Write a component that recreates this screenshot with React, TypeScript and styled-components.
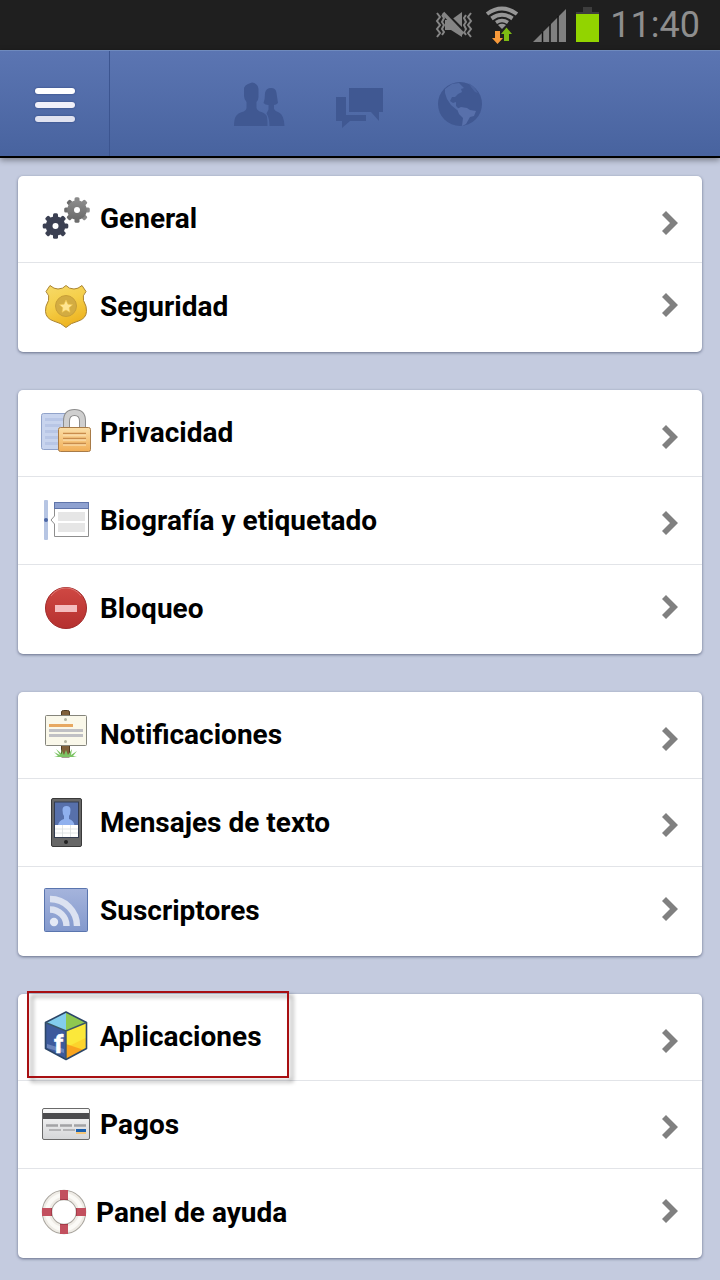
import React from 'react';
import styled, { createGlobalStyle } from 'styled-components';

const GlobalStyle = createGlobalStyle`
	* {
		box-sizing: border-box;
	}
	body {
		margin: 0;
		background-color: #c4cbdf;
		font-family: Roboto, 'Liberation Sans', sans-serif;
	}
`;

const StatusBar = styled.div`
	height: 50px;
	padding-right: 20px;
	display: flex;
	align-items: center;
	justify-content: flex-end;
	gap: 10px;
	background-color: #1f1f1f;
	svg {
		display: block;
	}
	time {
		font-size: 36px;
		line-height: 50px;
		font-weight: 400;
		color: #8e8e8e;
	}
`;

const TopBar = styled.header`
	display: grid;
	grid-template-columns: 110px 1fr 110px;
	height: 108px;
	border-top: 1px solid #6f8abd;
	border-bottom: 2px solid #000;
	background: linear-gradient(#5b75b2, #48639f);
	box-shadow: 0 2px 6px rgba(0, 0, 0, 0.4);
`;

const MenuButton = styled.button`
	display: flex;
	flex-direction: column;
	align-items: center;
	justify-content: center;
	gap: 8px;
	padding: 2px 0 0;
	border: none;
	border-right: 1px solid #3c5590;
	background: none;
`;

const Bar = styled.span<{ $color: string }>`
	width: 40px;
	height: 6px;
	border-radius: 3px;
	background-color: ${({ $color }) => $color};
	box-shadow: 0 0 2px #2c4178;
`;

const Tabs = styled.nav`
	display: flex;
	justify-content: center;
`;

const TabButton = styled.button`
	display: flex;
	align-items: center;
	justify-content: center;
	width: 100px;
	padding: 0 0 2px;
	border: none;
	background: none;
	color: #405892;
	svg {
		overflow: visible;
	}
`;

const Content = styled.main`
	display: flex;
	flex-direction: column;
	gap: 38px;
	padding: 18px 18px 22px;
`;

const Card = styled.ul`
	margin: 0;
	padding: 0;
	list-style: none;
	border-radius: 5px;
	background-color: #fff;
	box-shadow: 0 1px 3px rgba(40, 50, 80, 0.6);
`;

const ItemLink = styled.a`
	display: flex;
	align-items: center;
	gap: 8px;
	height: 86px;
	padding: 0 24px 0 22px;
	color: #000;
	text-decoration: none;
	svg {
		flex: none;
	}
`;

const Label = styled.span`
	flex: 1;
	padding-top: 2px;
	font-size: 28px;
	line-height: 32px;
	font-weight: 700;
`;

const Item = styled.li`
	position: relative;
	padding-bottom: 1px;
	border-bottom: 1px solid #e2e4e8;
	.chevron {
		margin-top: 6px;
	}
	&:first-child {
		padding-bottom: 0;
		.chevron {
			margin-top: 8px;
		}
		${Label} {
			padding-top: 0;
		}
	}
	&:last-child {
		padding-bottom: 3px;
		border-bottom: none;
		.chevron {
			margin: 0 0 2px;
		}
	}
`;

const Highlight = styled.div`
	position: absolute;
	top: -3px;
	left: 9px;
	width: 262px;
	height: 87px;
	border: 2px solid #a80f12;
	filter: drop-shadow(4px 4px 2px rgba(0, 0, 0, 0.4));
	pointer-events: none;
`;

/* status bar */

const VibrateIcon = () => (
	<svg width='40' height='50' viewBox='0 0 40 50' fill='none' stroke='#858585' strokeWidth='2'>
		<path d='M3 13l3 4-3 4 3 4-3 4 3 4-3 4M8 15l2 3-2 4 2 3-2 4 2 3-2 3M37 13l-3 4 3 4-3 4 3 4-3 4 3 4M32 15l-2 3 2 4-2 3 2 4-2 3 2 3' />
		<path d='M11 20h6l11-8v25l-11-7h-6z' fill='#858585' stroke='none' />
		<path d='M10 11l20 20' stroke='#1f1f1f' strokeWidth='2.500' />
		<path d='M9 13l20 21' strokeWidth='3.500' />
	</svg>
);

const WifiIcon = () => (
	<svg width='36' height='50' viewBox='0 0 36 50' fill='none' stroke='#969696' strokeWidth='4'>
		<path d='M3 14Q18 3 33 14M7.500 18.500Q18 11 28.500 18.500' />
		<path d='M12 22.500Q18 18.500 24 22.500' strokeWidth='3.500' />
		<path d='M14 25Q18 22.500 22 25L18 29z' fill='#969696' stroke='none' />
		<path d='M11 31h5v7h3l-5.500 6L8 38h3z' fill='#f7993a' stroke='none' />
		<path d='M20 41h5v-7h3l-5.500-6.500L17 34h3z' fill='#7dbb13' stroke='none' />
	</svg>
);

const SignalIcon = () => (
	<svg width='36' height='50' viewBox='0 0 36 50'>
		<path d='M3 42L36 9v33z' fill='#808080' />
		<path d='M12.500 32v10M20 24v18M28 16v26' stroke='#111' strokeWidth='1.500' />
	</svg>
);

const BatteryIcon = () => (
	<svg width='24' height='50' viewBox='0 0 24 50'>
		<path d='M7 7h9v5h7v2H0v-2h7z' fill='#3d3d3d' />
		<rect y='14' width='23' height='28' fill='#92d400' />
	</svg>
);

/* top bar */

const FriendsIcon = () => (
	<svg width='52' height='46' viewBox='0 0 52 46' fill='currentColor'>
		<path d='M10 8q1-3 4-4l4-1.500q6 1 6.500 6.500v8q0 3-2 5v6q1 3 5 4 5 2 5.500 5 .500 3 .500 9H0q0-7 2-10 2-3 6-4 4-1 4.500-4v-6q-2.500-3-2.500-6z' />
		<path d='M31 13q1-5 6-5 5 0 5.500 5l1.500 10q-2 2-4 2v4q1 2 5 3.500 5 2.500 5.500 13.500H35.500q0-8-3-12.500l2-4v-4.500q-3.500 0-5-2 1.500-4 1.500-10z' />
	</svg>
);

const MessagesIcon = () => (
	<svg width='52' height='46' viewBox='0 0 52 46' fill='currentColor'>
		<path d='M15 8h34v24h-4v9l-8-9H15z' />
		<path d='M2 17h10v18h20v6H16l-8 7v-7H2z' />
	</svg>
);

const GlobeIcon = () => (
	<svg width='52' height='46' viewBox='0 0 52 46'>
		<circle cx='26' cy='24' r='22' fill='currentColor' />
		<path d='M11 9l7-5 7-1 5 5-3 1 1 3-4 2-3 3-3 0-2 4 3 2 3-1v4l3 3-2 1-6-5-4-6-2-6z' fill='#526ca8' />
		<path d='M23 29l4-2 6 1 3 2 6 1-2 5-4 1-4 7-4 2 1-8-4-4z' fill='#5870ab' />
		<path d='M35 3l5 4 4 6-3-1-4-5z' fill='#4a639f' />
	</svg>
);

/* list */

const Chevron = () => (
	<svg className='chevron' width='16' height='24' viewBox='0 0 16 24'>
		<path d='M0 4l4-4 12 12L4 24l-4-4 8-8z' fill='#808080' />
	</svg>
);

const Gear = ({ x, y, fill }: { x: number; y: number; fill: string }) => (
	<g transform={`translate(${x} ${y})`}>
		{[0, 45, 90, 135].map((angle) => (
			<rect key={angle} x='-2.500' y='-12.800' width='5' height='25.600' rx='1.500' fill={fill} transform={`rotate(${angle})`} />
		))}
		<circle r='9.800' fill={fill} />
		<circle r='3' fill='#fff' />
	</g>
);

const GearsIcon = () => (
	<svg width='52' height='52' viewBox='0 0 52 52'>
		<defs>
			<linearGradient id='steel' x1='0' y1='0' x2='0' y2='1'>
				<stop offset='0' stopColor='#8c8c8c' />
				<stop offset='1' stopColor='#6a6a6a' />
			</linearGradient>
		</defs>
		<Gear x={37} y={17} fill='url(#steel)' />
		<Gear x={15.5} y={33} fill='#3b4052' />
	</svg>
);

const ShieldIcon = () => (
	<svg width='52' height='52' viewBox='0 0 52 52'>
		<defs>
			<linearGradient id='gold' x1='0' y1='0' x2='0.4' y2='1'>
				<stop offset='0' stopColor='#f6da6a' />
				<stop offset='0.5' stopColor='#f5cf4a' />
				<stop offset='1' stopColor='#eeb522' />
			</linearGradient>
		</defs>
		<path
			d='M26 5.500q3 3.500 8 3.500 4 0 8-3.500l4 6q-4 4-2.500 9 3.500 6 3 11-.500 7-8 9.500-8 2-12.500 6.500-4.500-4.500-12.500-6.500-7.500-2.500-8-9.500-.500-5 3-11 1.500-5-2.500-9l4-6q4 3.500 8 3.500 5 0 8-3.500z'
			fill='url(#gold)'
			stroke='#ab8430'
		/>
		<circle cx='26' cy='26' r='10.500' fill='#d3ac42' stroke='#c89f38' />
		<path d='M26 20l1.900 4.200 4.600.500-3.400 3.100.900 4.500-4-2.300-4 2.300.900-4.500-3.400-3.100 4.600-.500z' fill='#ffe592' stroke='#f4c74a' strokeWidth='0.600' />
	</svg>
);

const PrivacyIcon = () => (
	<svg width='52' height='52' viewBox='0 0 52 52'>
		<defs>
			<linearGradient id='lock' x1='0' y1='0' x2='0' y2='1'>
				<stop offset='0' stopColor='#fbdfa8' />
				<stop offset='1' stopColor='#f1ae56' />
			</linearGradient>
		</defs>
		<rect x='1.500' y='6.500' width='36' height='36' rx='2' fill='#c8d4ee' stroke='#91a3ca' />
		<path d='M5 12.500h20M5 18.500h16M5 24.500h14M5 30.500h14M5 36.500h14' stroke='#b8c6e6' strokeWidth='3' />
		<path d='M26.500 22v-8q0-8.500 8-8.500t8 8.500v8' fill='#fff' stroke='#8c8c8c' strokeWidth='7' />
		<path d='M26.500 22v-8q0-8.500 8-8.500t8 8.500v8' fill='none' stroke='#cfcfcf' strokeWidth='5' />
		<rect x='18.500' y='20.500' width='32' height='24' rx='2' fill='url(#lock)' stroke='#a87b48' />
		<path d='M23 26.500h23M23 31.500h23M23 36.500h23' stroke='#c98c4c' strokeWidth='1.500' />
		<path d='M23 28h23M23 33h23M23 38h23' stroke='#fde6bb' />
	</svg>
);

const TimelineIcon = () => (
	<svg width='52' height='52' viewBox='0 0 52 52'>
		<rect x='4' y='6' width='4' height='40' rx='1' fill='#b6c5e3' />
		<circle cx='6' cy='26' r='2' fill='#4a66a5' />
		<path d='M14.500 8.500h34v34h-34V30l-3.500-4 3.500-4z' fill='#fff' stroke='#8e8e8e' />
		<rect x='14.500' y='8.500' width='34' height='6' fill='#8ea1d0' stroke='#6075aa' />
		<path d='M18 18h27v9H18zM18 29h27v9H18z' fill='#e6e6e6' />
	</svg>
);

const BlockIcon = () => (
	<svg width='52' height='52' viewBox='0 0 52 52'>
		<defs>
			<linearGradient id='stop' x1='0' y1='0' x2='0' y2='1'>
				<stop offset='0' stopColor='#cf4843' />
				<stop offset='1' stopColor='#b5302f' />
			</linearGradient>
		</defs>
		<circle cx='26' cy='26' r='20.500' fill='url(#stop)' stroke='#a02a2a' />
		<path d='M11 14q6-8 15-8t15 8' fill='none' stroke='#de7671' />
		<rect x='15' y='23' width='22' height='7' fill='#f4bcbe' />
	</svg>
);

const NoticeIcon = () => (
	<svg width='52' height='52' viewBox='0 0 52 52'>
		<path d='M21.500 48V3q0-1.500 2-1.500h4q2 0 2 1.500v45z' fill='#80603a' stroke='#503b22' />
		<rect x='5.500' y='6.500' width='41' height='30' rx='1' fill='#faf8ea' stroke='#85857c' />
		<path d='M9 16.500h24' stroke='#e7a861' strokeWidth='3' />
		<path d='M9 21.500h34M9 26.500h34' stroke='#c0c0c4' strokeWidth='3' />
		<circle cx='25.500' cy='10.500' r='1.500' fill='#b5b5a2' />
		<circle cx='25.500' cy='32.500' r='1.500' fill='#b5b5a2' />
		<path d='M14 43l6 3-4-6 6 5-1-5 3 6 2-5 2 5 4-6-1 6 6-4-4 5 4 1H14l4-1z' fill='#7cc464' />
	</svg>
);

const PhoneIcon = () => (
	<svg width='52' height='52' viewBox='0 0 52 52'>
		<rect x='11.500' y='2.500' width='30' height='48' rx='1.500' fill='#676767' stroke='#3a3a3a' />
		<rect x='14' y='5.500' width='25' height='36.500' fill='#333c50' />
		<rect x='15' y='6.500' width='23' height='23' fill='#5770ab' />
		<path d='M22.500 14q0-4 4-4t4 4q0 4-1.500 6v3q5 1.500 5.500 6.500H18q.500-5 6-6.500v-3q-1.500-2-1.500-6z' fill='#8fb0ee' />
		<rect x='15' y='29' width='23' height='12' fill='#fff' />
		<path d='M22.500 29v12M30.500 29v12M15 33h23M15 37h23' stroke='#d9dee0' strokeWidth='0.800' />
		<circle cx='26' cy='46' r='2' fill='#222' />
	</svg>
);

const FeedIcon = () => (
	<svg width='52' height='52' viewBox='0 0 52 52'>
		<defs>
			<linearGradient id='feed' x1='0' y1='0' x2='0' y2='1'>
				<stop offset='0' stopColor='#a5b4dc' />
				<stop offset='1' stopColor='#8399cd' />
			</linearGradient>
		</defs>
		<rect x='4.500' y='4.500' width='43' height='43' rx='1' fill='url(#feed)' stroke='#5a75ae' />
		<circle cx='14' cy='38' r='4.200' fill='#e4e9f5' />
		<path d='M10 25.500a16.500 16.500 0 0 1 16.500 16.500M10 15a27 27 0 0 1 27 27' fill='none' stroke='#dce2f1' strokeWidth='6.400' />
	</svg>
);

const AppsIcon = () => (
	<svg width='52' height='52' viewBox='0 0 52 52'>
		<path d='M26 1v19L5.500 11.500z' fill='#83cdee' />
		<path d='M26 1v19l20.500-8.500z' fill='#8ec850' />
		<path d='M26 20L5.500 11.500v26L26 48.500z' fill='#3d5a9c' />
		<path d='M7 33l17 5v4L7 37z' fill='#6b84bb' />
		<path d='M26 20l20.500-8.500v26L26 48.500z' fill='#fcd42c' />
		<path d='M26 20l20.500-8.500v15L27 36z' fill='#fbe83a' />
		<path d='M26 33l18 6-18 9.500z' fill='#f9a41e' />
		<path d='M26 1L5.500 11.500v26L26 48.500l20.500-11v-26z' fill='none' stroke='#2c4668' strokeWidth='1.600' strokeLinejoin='round' />
		<path d='M5.500 11.500L26 20l20.500-8.500M26 20v28' fill='none' stroke='#3a5668' strokeWidth='1.400' />
		<text x='14' y='42' fill='#fff' stroke='#fff' strokeWidth='0.500' fontSize='26' fontWeight='700' fontFamily='Roboto, sans-serif'>
			f
		</text>
	</svg>
);

const CardIcon = () => (
	<svg width='52' height='52' viewBox='0 0 52 52'>
		<defs>
			<linearGradient id='plastic' x1='0' y1='0' x2='0' y2='1'>
				<stop offset='0' stopColor='#fafafa' />
				<stop offset='1' stopColor='#d5d6d8' />
			</linearGradient>
		</defs>
		<rect x='2.500' y='10.500' width='47' height='31' rx='1.500' fill='url(#plastic)' stroke='#6a6a6a' />
		<rect x='3' y='15' width='46' height='6' fill='#4b4b4d' />
		<path d='M6 27.500h12M20 27.500h12M34 27.500h12' stroke='#a3a3a5' strokeWidth='2.500' />
		<path d='M9 32h12M23 32h12' stroke='#b4b4b6' strokeWidth='2' />
		<rect x='36' y='31' width='10' height='3' fill='#1a5fae' />
		<rect x='36' y='34' width='10' height='2' fill='#f3c579' />
	</svg>
);

const HelpIcon = () => (
	<svg width='48' height='52' viewBox='0 0 48 52' fill='none'>
		<circle cx='24' cy='26' r='17' stroke='#aaa69f' strokeWidth='10.500' />
		<circle cx='24' cy='26' r='17' stroke='#efece6' strokeWidth='8.500' />
		<circle cx='24' cy='26' r='17' stroke='#fbfaf6' strokeWidth='4' />
		<path d='M24 4v10M24 38v10M2 26h10M36 26h10' stroke='#c2505e' strokeWidth='8' />
		<path d='M20 13.500h8M20 38.500h8M11.500 22v8M36.500 22v8' stroke='#a53b49' />
	</svg>
);

interface Setting {
	label: string;
	icon: React.ReactElement;
	highlighted?: boolean;
}

const groups: Setting[][] = [
	[
		{ label: 'General', icon: <GearsIcon /> },
		{ label: 'Seguridad', icon: <ShieldIcon /> },
	],
	[
		{ label: 'Privacidad', icon: <PrivacyIcon /> },
		{ label: 'Biografía y etiquetado', icon: <TimelineIcon /> },
		{ label: 'Bloqueo', icon: <BlockIcon /> },
	],
	[
		{ label: 'Notificaciones', icon: <NoticeIcon /> },
		{ label: 'Mensajes de texto', icon: <PhoneIcon /> },
		{ label: 'Suscriptores', icon: <FeedIcon /> },
	],
	[
		{ label: 'Aplicaciones', icon: <AppsIcon />, highlighted: true },
		{ label: 'Pagos', icon: <CardIcon /> },
		{ label: 'Panel de ayuda', icon: <HelpIcon /> },
	],
];

const App = () => {
	return (
		<>
			<GlobalStyle />
			<StatusBar>
				<VibrateIcon />
				<WifiIcon />
				<SignalIcon />
				<BatteryIcon />
				<time>11:40</time>
			</StatusBar>
			<TopBar>
				<MenuButton aria-label='Menú'>
					<Bar $color='#ffffff' />
					<Bar $color='#f0f0f9' />
					<Bar $color='#e0e2f0' />
				</MenuButton>
				<Tabs>
					<TabButton aria-label='Amigos'>
						<FriendsIcon />
					</TabButton>
					<TabButton aria-label='Mensajes'>
						<MessagesIcon />
					</TabButton>
					<TabButton aria-label='Notificaciones'>
						<GlobeIcon />
					</TabButton>
				</Tabs>
			</TopBar>
			<Content>
				{groups.map((group) => (
					<Card key={group[0].label}>
						{group.map(({ label, icon, highlighted }) => (
							<Item key={label}>
								<ItemLink href='#'>
									{icon}
									<Label>{label}</Label>
									<Chevron />
								</ItemLink>
								{highlighted && <Highlight />}
							</Item>
						))}
					</Card>
				))}
			</Content>
		</>
	);
};

export default App;
